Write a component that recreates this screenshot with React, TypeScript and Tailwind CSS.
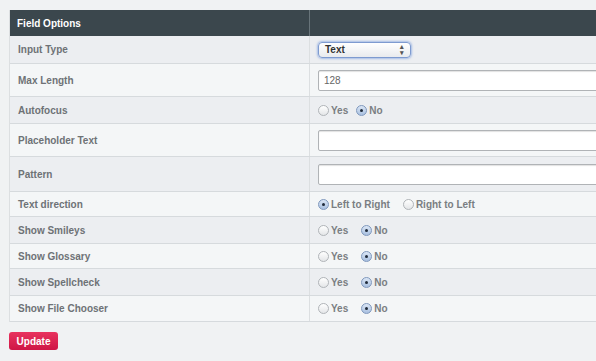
import React from 'react';

type Row =
  | { label: string; kind: 'select'; value: string }
  | { label: string; kind: 'input'; value?: string }
  | { label: string; kind: 'radio'; options: string[]; checked: number; gap?: string };

const rows: Row[] = [
  { label: 'Input Type', kind: 'select', value: 'Text' },
  { label: 'Max Length', kind: 'input', value: '128' },
  { label: 'Autofocus', kind: 'radio', options: ['Yes', 'No'], checked: 1, gap: 'gap-[8px]' },
  { label: 'Placeholder Text', kind: 'input' },
  { label: 'Pattern', kind: 'input' },
  { label: 'Text direction', kind: 'radio', options: ['Left to Right', 'Right to Left'], checked: 0 },
  { label: 'Show Smileys', kind: 'radio', options: ['Yes', 'No'], checked: 1 },
  { label: 'Show Glossary', kind: 'radio', options: ['Yes', 'No'], checked: 1 },
  { label: 'Show Spellcheck', kind: 'radio', options: ['Yes', 'No'], checked: 1 },
  { label: 'Show File Chooser', kind: 'radio', options: ['Yes', 'No'], checked: 1 },
];

const Radio = ({ on }: { on: boolean }) =>
  on ? (
    <span className="w-[11px] h-[11px] rounded-full border border-[#7f98bd] bg-gradient-to-b from-[#dbe6f5] to-[#a9c0e0] flex items-center justify-center">
      <span className="w-[3px] h-[3px] rounded-full bg-[#1f2a3a]" />
    </span>
  ) : (
    <span className="w-[11px] h-[11px] rounded-full border border-[#b0b4b8] bg-gradient-to-b from-[#ffffff] to-[#e4e6e8]" />
  );

const Cell = ({ row }: { row: Row }) => {
  if (row.kind === 'select') {
    return (
      <div className="w-[93px] h-[16px] rounded-[4px] border border-[#7e9bd0] shadow-[0_0_2px_1px_rgba(110,150,220,0.55)] bg-gradient-to-b from-[#ffffff] to-[#e9ebee] flex items-center justify-between pl-[6px] pr-[6px] text-[10px] font-bold text-[#333]">
        <span>{row.value}</span>
        <span className="text-[7px] leading-[6px] flex flex-col text-[#555]">
          <span>▴</span>
          <span>▾</span>
        </span>
      </div>
    );
  }
  if (row.kind === 'input') {
    return (
      <div className="w-[300px] h-[21px] rounded-[2px] border border-[#b0b3b6] shadow-[inset_0_1px_1px_rgba(0,0,0,0.12)] bg-white flex items-center pl-[5px] text-[10px] text-[#666]">
        {row.value}
      </div>
    );
  }
  return (
    <div className={`flex items-center ${row.gap ?? 'gap-[13px]'}`}>
      {row.options.map((opt, i) => (
        <span key={opt} className="flex items-center gap-[2px] font-bold text-[10px] text-[#7a7e82]">
          <Radio on={i === row.checked} />
          {opt}
        </span>
      ))}
    </div>
  );
};

const heights = ['h-[28px]', 'h-[33px]', 'h-[27px]', 'h-[33px]', 'h-[35px]', 'h-[25px]', 'h-[27px]', 'h-[25px]', 'h-[27px]', 'h-[26px]'];

export default function App() {
  return (
    <div className="w-[596px] h-[361px] overflow-hidden bg-[#f0f2f3] font-['Liberation_Sans',Arial,sans-serif]">
      <div className="pl-[9px] pt-[10px]">
        <div className="w-[620px] border-l border-[#dcdfe1]">
          <div className="flex h-[26px] bg-[#3b474d] text-white text-[10px] font-bold">
            <div className="w-[299px] pl-[7px] flex items-center">Field Options</div>
            <div className="flex-1 border-l border-[#68747a]" />
          </div>
          {rows.map((row, i) => (
            <div
              key={row.label}
              className={`flex ${heights[i]} border-b border-[#d6dadd] ${i % 2 === 0 ? 'bg-[#eceef1]' : 'bg-[#f4f6f7]'}`}
            >
              <div className="w-[299px] pl-[8px] flex items-center text-[10px] font-bold text-[#6e7276]">
                {row.label}
              </div>
              <div className="flex-1 border-l border-[#dcdfe1] pl-[8px] flex items-center">
                <Cell row={row} />
              </div>
            </div>
          ))}
        </div>
        <button className="mt-[10px] w-[49px] h-[18px] rounded-[3px] bg-gradient-to-b from-[#e8325e] to-[#cf1546] text-white text-[10px] font-bold flex items-center justify-center">
          Update
        </button>
      </div>
    </div>
  );
}
